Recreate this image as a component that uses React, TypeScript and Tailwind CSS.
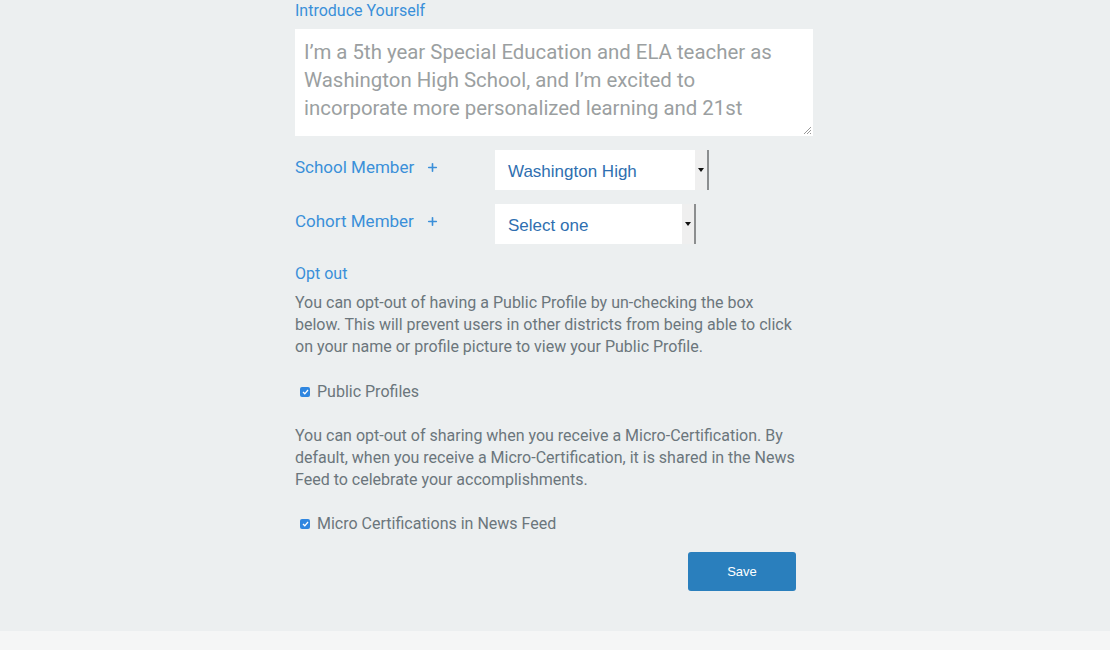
import { Plus } from 'lucide-react';

function SelectBox({ value, width }: { value: string; width: string }) {
  return (
    <div className={`flex h-[40px] ${width}`}>
      <div className="flex flex-1 items-center bg-white pl-[13px] pt-[3px] text-[17px] text-[#2f6fb0] [font-family:'Liberation_Sans',Arial,sans-serif]">
        {value}
      </div>
      <div className="flex w-[14px] items-center justify-center border-r-2 border-[#8c8e8f] bg-[#efefef]">
        <svg width="6" height="4" viewBox="0 0 6 4">
          <path d="M0 0h6L3 4z" fill="#111" />
        </svg>
      </div>
    </div>
  );
}

function Check({ label }: { label: string }) {
  return (
    <label className="flex items-center gap-[7px] pl-[5px] text-[16px] text-[#6b767c]">
      <span className="flex h-[10px] w-[10px] items-center justify-center rounded-[2px] bg-[#2f86e0]">
        <svg width="7" height="6" viewBox="0 0 7 6">
          <path d="M1 3l1.8 1.8L6 1" stroke="white" strokeWidth="1.3" fill="none" />
        </svg>
      </span>
      {label}
    </label>
  );
}

export default function App() {
  return (
    <div className="flex min-h-[650px] flex-col bg-[#eceff0] [font-family:Roboto,'Noto_Sans',sans-serif]">
      <div className="mx-auto flex h-[631px] w-[518px] -translate-x-[1px] flex-col">
        <div className="mt-[1px] text-[16px] leading-[20px] text-[#3a8fd9]">Introduce Yourself</div>
        <div className="relative mt-[8px] h-[107px] bg-white pl-[9px] pr-[20px] pt-[9px] text-[20.4px] leading-[28px] text-[#9b9fa1]">
          I’m a 5th year Special Education and ELA teacher as Washington High School, and I’m excited to
          incorporate more personalized learning and 21st
          <svg className="absolute bottom-[1px] right-[1px]" width="10" height="10" viewBox="0 0 10 10">
            <path d="M9 2L2 9M9 5L5 9M9 8L8 9" stroke="#999" strokeWidth="1" />
          </svg>
        </div>

        <div className="mt-[14px] flex items-start">
          <div className="flex w-[200px] items-center pt-[5px] text-[17px] leading-[24px] text-[#3a8fd9]">
            School Member
            <Plus className="ml-[12px] h-[13px] w-[13px]" strokeWidth={3} />
          </div>
          <SelectBox value="Washington High" width="w-[214px]" />
        </div>
        <div className="mt-[14px] flex items-start">
          <div className="flex w-[200px] items-center pt-[5px] text-[17px] leading-[24px] text-[#3a8fd9]">
            Cohort Member
            <Plus className="ml-[12px] h-[13px] w-[13px]" strokeWidth={3} />
          </div>
          <SelectBox value="Select one" width="w-[201px]" />
        </div>

        <div className="mt-[19px] text-[16px] leading-[22px] text-[#3a8fd9]">Opt out</div>
        <p className="mt-[7px] w-[500px] text-[16px] leading-[22px] text-[#6b767c]">
          You can opt-out of having a Public Profile by un-checking the box below. This will prevent users in
          other districts from being able to click on your name or profile picture to view your Public Profile.
        </p>
        <div className="mt-[22px]">
          <Check label="Public Profiles" />
        </div>
        <p className="mt-[21px] w-[505px] text-[16px] leading-[22px] text-[#6b767c]">
          You can opt-out of sharing when you receive a Micro-Certification. By default, when you receive a
          Micro-Certification, it is shared in the News Feed to celebrate your accomplishments.
        </p>
        <div className="mt-[21px]">
          <Check label="Micro Certifications in News Feed" />
        </div>
        <div className="mt-[16px] flex justify-end pr-[17px]">
          <button className="h-[39px] w-[108px] rounded-[3px] bg-[#2a7fbd] text-[13px] text-white [font-family:'Liberation_Sans',Arial,sans-serif]">
            Save
          </button>
        </div>
      </div>
      <div className="h-[19px] bg-[#f5f6f6]" />
    </div>
  );
}
